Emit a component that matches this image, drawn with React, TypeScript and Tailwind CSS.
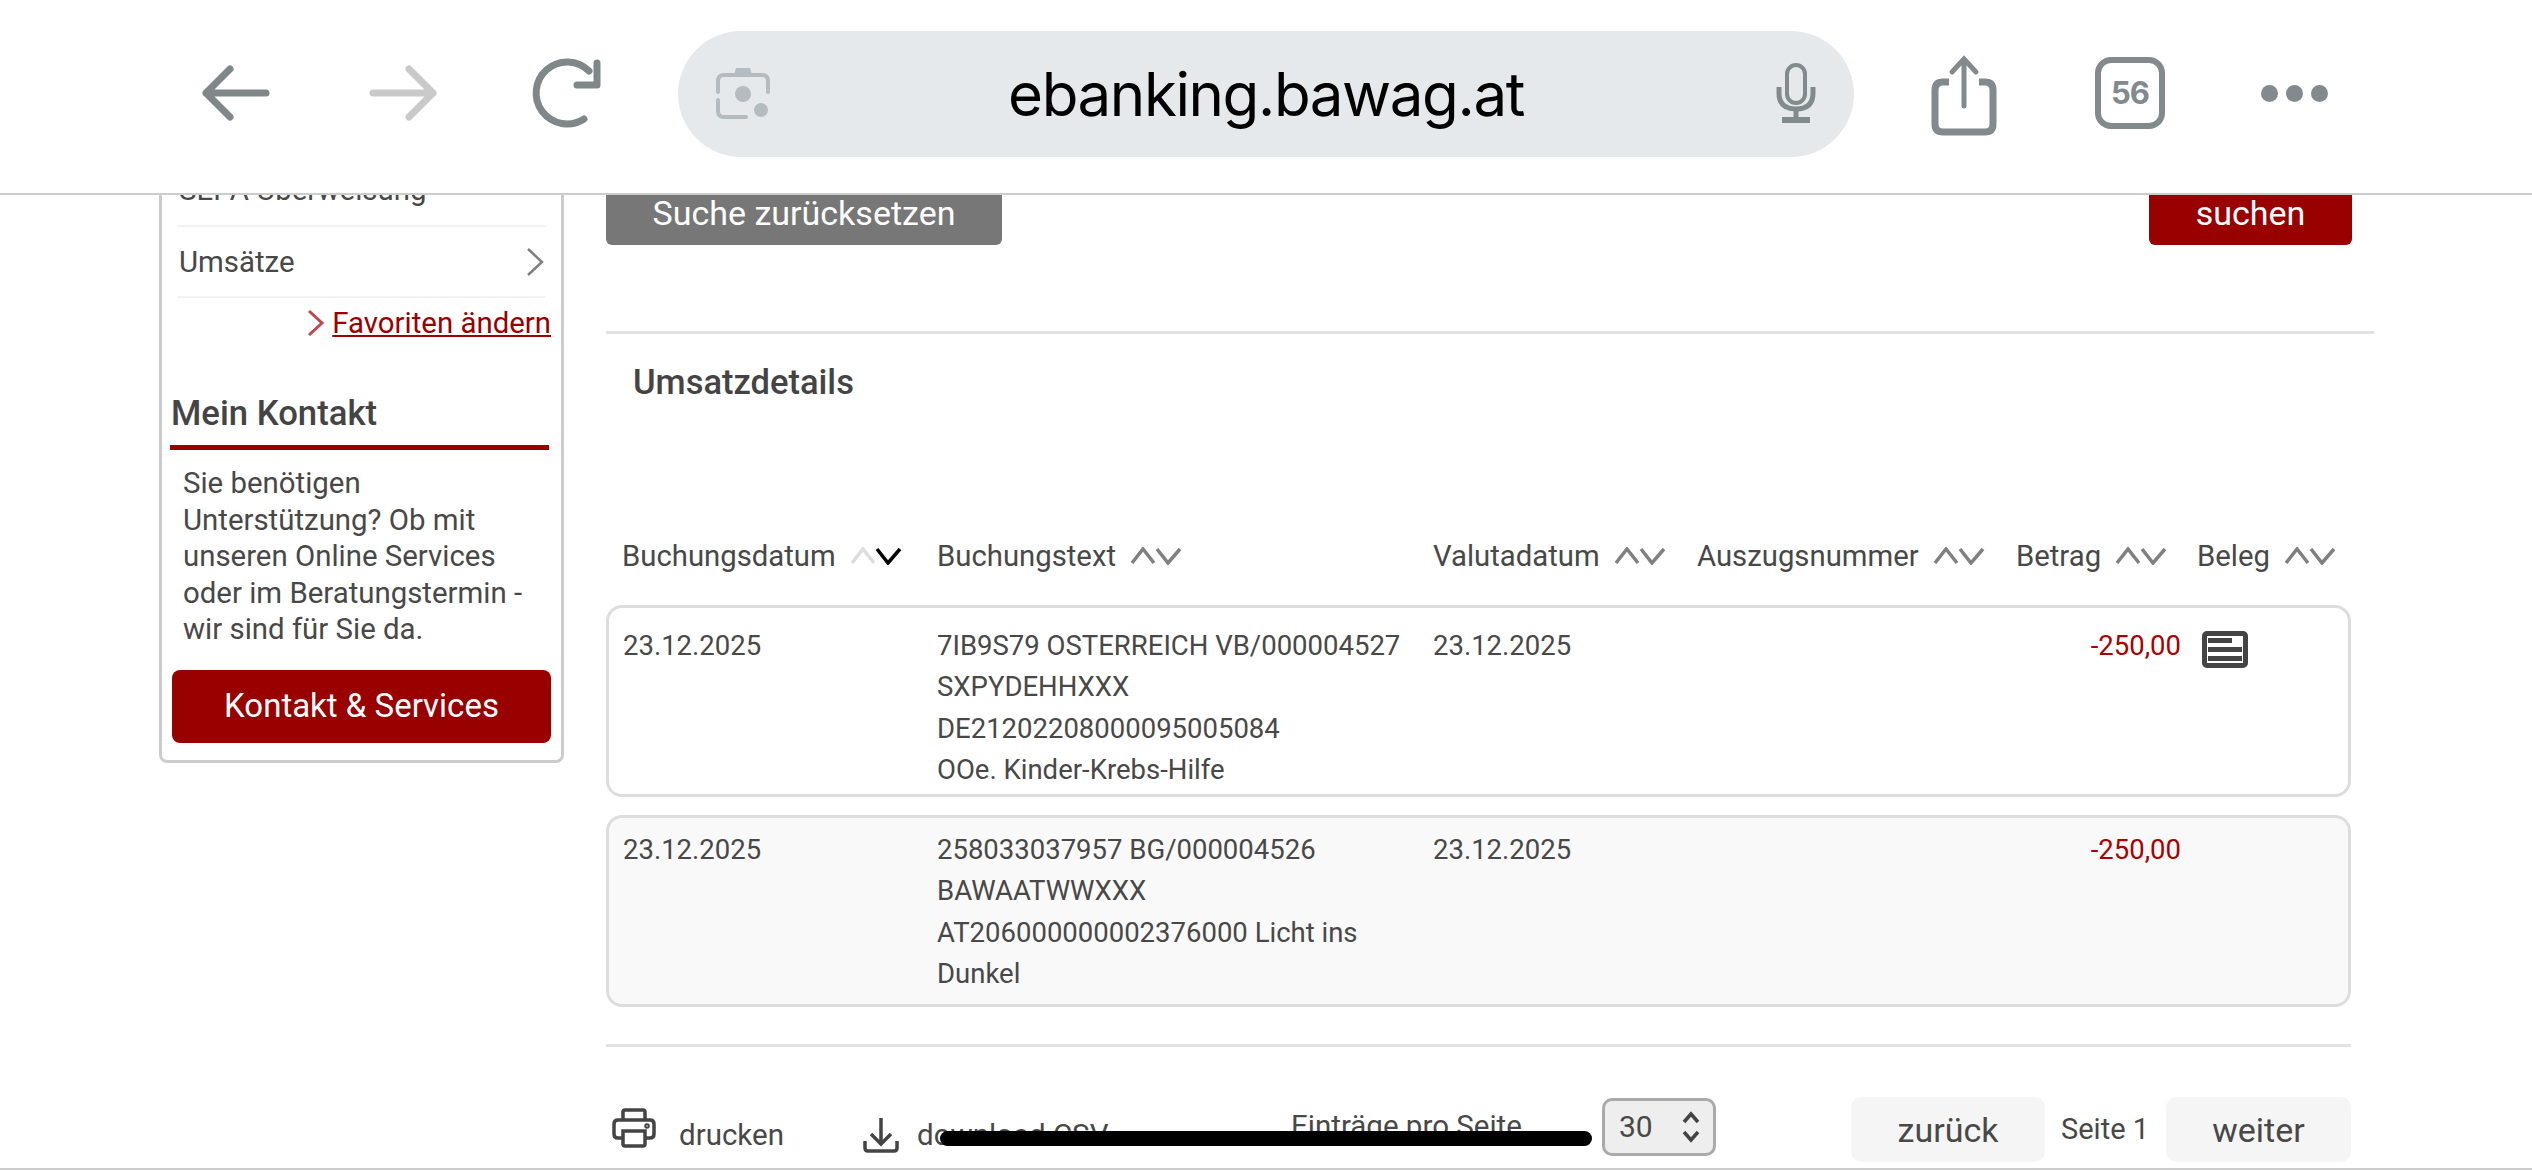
import React from 'react';

const SortIcon: React.FC<{ active?: boolean }> = ({ active }) => (
  <svg width="52" height="18" viewBox="0 0 52 18" fill="none" strokeWidth="3.5" className="shrink-0">
    <path d="M2 16 L13 2 L24 16" stroke={active ? '#dddddd' : '#808080'} />
    <path d="M27 2 L38 16 L50 2" stroke={active ? '#000000' : '#808080'} />
  </svg>
);

const TopBar: React.FC = () => (
  <header className="relative z-10 flex h-[195px] shrink-0 items-start border-b-2 border-[#cccccc] bg-white">
    <svg width="70" height="56" viewBox="0 0 70 56" fill="none" stroke="#7f8789" strokeWidth="7" strokeLinecap="round" strokeLinejoin="round" className="ml-[201px] mt-[65px] shrink-0">
      <path d="M29 4 L5 28 L29 52 M5 28 H65" />
    </svg>
    <svg width="70" height="56" viewBox="0 0 70 56" fill="none" stroke="#c9c9c9" strokeWidth="7" strokeLinecap="round" strokeLinejoin="round" className="ml-[97px] mt-[65px] shrink-0">
      <path d="M41 4 L65 28 L41 52 M5 28 H65" />
    </svg>
    <svg width="72" height="72" viewBox="0 0 72 72" fill="none" stroke="#7f8789" strokeWidth="7" strokeLinecap="round" className="ml-[93px] mt-[58px] shrink-0">
      <path d="M53 61 A31 31 0 1 1 58 13" />
      <path d="M66 5 V27 H46" strokeLinejoin="round" />
    </svg>
    <div className="relative ml-[75px] mt-[31px] flex h-[126px] w-[1176px] shrink-0 items-center justify-center rounded-[63px] bg-[#e6e9ec] font-['Inter',sans-serif] text-[60px] tracking-[-1.4px] text-black">
      <svg width="58" height="56" viewBox="0 0 58 56" fill="none" className="absolute left-[36px] top-[34px]">
        <path d="M22 3 H36 L38 10 H20 Z" fill="#b5bcc1" />
        <path d="M4 27 V16 Q4 10 10 10 H48 Q54 10 54 16 V27 M4 35 V46 Q4 52 10 52 H32" stroke="#b5bcc1" strokeWidth="4" strokeLinecap="round" />
        <circle cx="29" cy="29" r="8" fill="#b5bcc1" />
        <circle cx="47" cy="45" r="7" fill="#b5bcc1" />
      </svg>
      ebanking.bawag.at
      <svg width="40" height="60" viewBox="0 0 40 60" fill="none" stroke="#828a8d" strokeWidth="4" className="absolute right-[38px] top-[32px]">
        <rect x="11" y="2" width="18" height="38" rx="9" />
        <path d="M3 24 V30 Q3 46 20 46 Q37 46 37 30 V24" strokeWidth="5" />
        <path d="M20 46 V55" strokeWidth="5" />
        <path d="M6 57 H34" strokeWidth="6" />
      </svg>
    </div>
    <svg width="66" height="82" viewBox="0 0 66 82" fill="none" stroke="#828a8d" strokeWidth="7" className="ml-[77px] mt-[54px] shrink-0">
      <path d="M18 28 H12 Q4 28 4 36 V70 Q4 78 12 78 H54 Q62 78 62 70 V36 Q62 28 54 28 H48" />
      <path d="M33 52 V6 M21 18 L33 5 L45 18" strokeWidth="5" strokeLinecap="round" />
    </svg>
    <div className="ml-[98px] mt-[57px] flex h-[72px] w-[70px] shrink-0 items-center justify-center rounded-[16px] border-[6px] border-[#828a8d] font-['Inter',sans-serif] text-[31px] font-bold tracking-[-1px] text-[#828a8d]">
      56
    </div>
    <div className="ml-[96px] mt-[85px] flex shrink-0 gap-[8px]">
      <span className="h-[17px] w-[17px] rounded-full bg-[#828a8d]" />
      <span className="h-[17px] w-[17px] rounded-full bg-[#828a8d]" />
      <span className="h-[17px] w-[17px] rounded-full bg-[#828a8d]" />
    </div>
  </header>
);

const Sidebar: React.FC = () => (
  <aside className="h-[618px] w-[405px] shrink-0 rounded-b-lg border-[3px] border-[#cccccc] bg-white text-[29.4px]">
    <div className="mx-[15px] mt-[7px] flex h-[72px] items-center border-b-2 border-[#f3f3f3] pl-[2px]">SEPA Überweisung</div>
    <div className="mx-[15px] flex h-[71px] items-center justify-between border-b-2 border-[#f3f3f3] pl-[2px]">
      Umsätze
      <svg width="20" height="30" viewBox="0 0 20 30" fill="none" stroke="#808080" strokeWidth="2.5" className="mr-[1px]">
        <path d="M3 2 L17 15 L3 28" />
      </svg>
    </div>
    <div className="mr-[10px] mt-[7px] flex h-[36px] items-center justify-end gap-[7px] text-[#990000]">
      <svg width="18" height="28" viewBox="0 0 18 28" fill="none" stroke="#c1474f" strokeWidth="3">
        <path d="M2 2 L15 14 L2 26" />
      </svg>
      <span className="underline">Favoriten ändern</span>
    </div>
    <h3 className="ml-[9px] mt-[52px] h-[40px] text-[34.7px] font-medium leading-[40px] text-[#444444]">Mein Kontakt</h3>
    <div className="ml-[8px] mt-[12px] h-[5px] w-[379px] bg-[#990000]" />
    <p className="ml-[21px] mt-[15px] w-[345px] leading-[36.6px]">
      Sie benötigen Unterstützung? Ob mit unseren Online Services oder im Beratungstermin - wir sind für Sie da.
    </p>
    <button className="ml-[10px] mt-[22px] h-[73px] w-[379px] rounded-lg bg-[#990000] text-[33px] text-white">Kontakt &amp; Services</button>
  </aside>
);

type Row = { lines: string[]; beleg?: boolean; tint?: boolean };

const rows: Row[] = [
  { lines: ['7IB9S79 OSTERREICH VB/000004527', 'SXPYDEHHXXX', 'DE21202208000095005084', 'OOe. Kinder-Krebs-Hilfe'], beleg: true },
  { lines: ['258033037957 BG/000004526', 'BAWAATWWXXX', 'AT206000000002376000 Licht ins', 'Dunkel'], tint: true },
];

const columns = ['Buchungstext', 'Valutadatum', 'Auszugsnummer', 'Betrag', 'Beleg'];

const TableRow: React.FC<{ row: Row }> = ({ row }) => (
  <div className={`grid h-[192px] w-[1745px] grid-cols-[328px_496px_264px_319px_165px_1fr] rounded-2xl border-[3px] border-[#dddddd] text-[27.5px] leading-[41.3px] ${row.tint ? 'bg-[#f9f9f9] pt-[11px]' : 'bg-white pt-[17px]'}`}>
    <div className="pl-[14px]">23.12.2025</div>
    <div>
      {row.lines.map(line => (
        <div key={line} className="whitespace-nowrap">{line}</div>
      ))}
    </div>
    <div>23.12.2025</div>
    <div />
    <div className="text-right text-[#aa0000]">-250,00</div>
    <div className="pl-[21px] pt-[6px]">
      {row.beleg && (
        <svg width="46" height="37" viewBox="0 0 46 37" fill="none">
          <rect x="0" y="0" width="46" height="37" rx="5" fill="#444444" />
          <rect x="5" y="5" width="36" height="27" fill="#ffffff" />
          <rect x="6" y="7" width="24" height="5" fill="#444444" />
          <rect x="6" y="16" width="34" height="5" fill="#444444" />
          <rect x="6" y="25" width="34" height="5" fill="#444444" />
        </svg>
      )}
    </div>
  </div>
);

const Content: React.FC = () => (
  <main className="ml-[42px] w-[1768px] pt-[15px]">
    <div className="flex h-[85px] w-[1746px] justify-between text-[34px] text-white">
      <button className="flex h-full w-[396px] items-end justify-center rounded-md bg-[#777777] pb-[14px]">Suche zurücksetzen</button>
      <button className="flex h-full w-[203px] items-end justify-center rounded-md bg-[#990000] pb-[14px]">suchen</button>
    </div>
    <div className="mt-[86px] h-[3px] bg-[#e2e2e2]" />
    <h2 className="ml-[27px] mt-[28px] h-[40px] text-[34.5px] font-medium leading-[40px] text-[#444444]">Umsatzdetails</h2>
    <div className="mt-[134px] grid h-[40px] w-[1745px] grid-cols-[331px_496px_264px_319px_181px_1fr] items-center text-[29.3px] leading-[40px]">
      <div className="flex items-center gap-[14px] pl-[16px]">
        Buchungsdatum
        <SortIcon active />
      </div>
      {columns.map(col => (
        <div key={col} className="flex items-center gap-[14px]">
          {col}
          <SortIcon />
        </div>
      ))}
    </div>
    <div className="mt-[29px] flex flex-col gap-[18px]">
      {rows.map(row => (
        <TableRow key={row.lines[0]} row={row} />
      ))}
    </div>
    <div className="mt-[37px] h-[3px] w-[1745px] bg-[#e2e2e2]" />
    <div className="mt-[50px] flex h-[66px] w-[1745px] items-start text-[29.5px]">
      <svg width="44" height="40" viewBox="0 0 44 40" fill="none" stroke="#444444" strokeWidth="3.5" className="ml-[6px] mt-[11px]">
        <path d="M11 12 V4 Q11 2 13 2 H31 Q33 2 33 4 V12" />
        <path d="M11 30 H6 Q2 30 2 26 V16 Q2 12 6 12 H38 Q42 12 42 16 V26 Q42 30 38 30 H33" />
        <path d="M11 23 H33 V36 Q33 38 31 38 H13 Q11 38 11 36 Z" />
        <circle cx="35" cy="18" r="1" />
      </svg>
      <span className="ml-[23px] mt-[20px] w-[146px]">drucken</span>
      <svg width="36" height="36" viewBox="0 0 36 36" fill="none" stroke="#444444" strokeWidth="3.5" className="ml-[38px] mt-[20px]">
        <path d="M18 1 V26 M8 17 L18 27 L28 17 M2 24 V31 Q2 34 5 34 H31 Q34 34 34 31 V24" />
      </svg>
      <span className="ml-[18px] mt-[20px] w-[374px] whitespace-nowrap">download CSV</span>
      <span className="mt-[11px] w-[311px] whitespace-nowrap">Einträge pro Seite</span>
      <div className="mt-[1px] flex h-[58px] w-[114px] items-center justify-between rounded-[10px] border-[3px] border-[#aaaaaa] bg-[#eeeeee] pl-[14px] pr-[12px] text-[30px]">
        30
        <svg width="20" height="32" viewBox="0 0 20 32" fill="none" stroke="#444444" strokeWidth="3.5">
          <path d="M3 11 L10 3 L17 11 M3 21 L10 29 L17 21" />
        </svg>
      </div>
      <button className="ml-[135px] h-[65px] w-[194px] rounded-[10px] bg-[#f5f5f5] text-[34px]">zurück</button>
      <span className="ml-[16px] mt-[14px] whitespace-nowrap text-[29px]">Seite 1</span>
      <button className="ml-auto h-[65px] w-[185px] rounded-[10px] bg-[#f5f5f5] text-[34px]">weiter</button>
    </div>
  </main>
);

export default function App() {
  return (
    <div className="relative flex h-[1170px] w-[2532px] flex-col overflow-hidden border-b-2 border-[#cccccc] bg-white font-['Roboto',sans-serif] text-[28px] leading-[36px] text-[#484848]">
      <TopBar />
      {/* page is scrolled, top part of it sits under the browser bar */}
      <div className="-mt-[50px] flex pl-[159px]">
        <Sidebar />
        <Content />
      </div>
      <div className="absolute left-[940px] top-[1131px] h-[15px] w-[652px] rounded-full bg-black" />
    </div>
  );
}
